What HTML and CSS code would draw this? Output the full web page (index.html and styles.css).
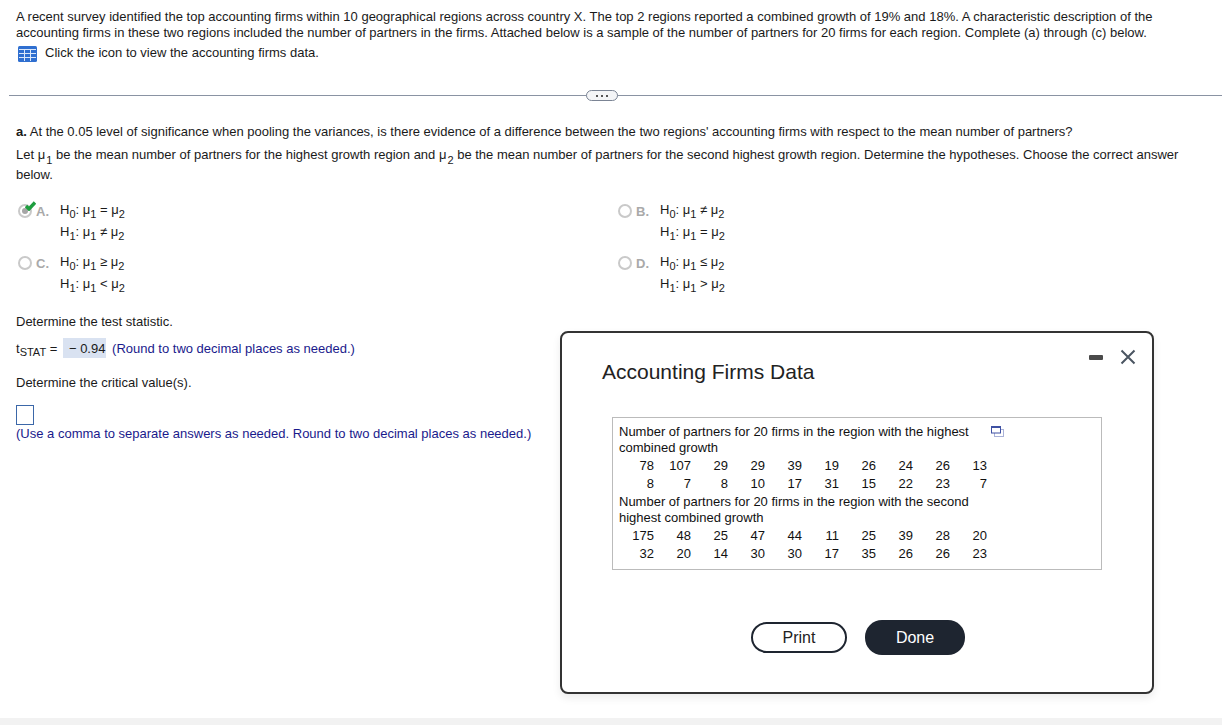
FILE: index.html
```html
<!DOCTYPE html>
<html lang="en">
<head>
<meta charset="utf-8">
<title>Accounting Firms Data</title>
<link rel="stylesheet" href="styles.css">
</head>
<body>
<main class="page">
  <section class="intro">
    <p>A recent survey identified the top accounting firms within 10 geographical regions across country X. The top 2 regions reported a combined growth of 19% and 18%. A characteristic description of the accounting firms in these two regions included the number of partners in the firms. Attached below is a sample of the number of partners for 20 firms for each region. Complete (a) through (c) below.</p>
    <div class="data-link">
      <svg class="grid-icon" width="19" height="16" viewBox="0 0 19 16"><rect width="19" height="16" rx="1.500" fill="#2f6fd0"/><path d="M1 3.500h17M1 7.500h17M1 11.500h17M6.500 3v12M12.500 3v12" stroke="#dbe8fa" stroke-width="1"/></svg>
      <span>Click the icon to view the accounting firms data.</span>
    </div>
  </section>
  <div class="divider"><span class="more"><i></i><i></i><i></i></span></div>
  <section class="question">
    <p class="q-line"><b>a.</b> At the 0.05 level of significance when pooling the variances, is there evidence of a difference between the two regions' accounting firms with respect to the mean number of partners?</p>
    <p class="q-let">Let <span class="mu">μ<sub>1</sub></span> be the mean number of partners for the highest growth region and <span class="mu">μ<sub>2</sub></span> be the mean number of partners for the second highest growth region. Determine the hypotheses. Choose the correct answer below.</p>
  </section>
  <section class="choices">
    <div class="choice">
      <span class="radio selected"><i></i><svg class="check" width="11" height="10" viewBox="0 0 11 10"><path d="M1 5l3 3L10 1.500" fill="none" stroke="#1e9e3e" stroke-width="3.400"/></svg></span>
      <span class="letter">A.</span>
      <div class="hyp"><div>H<sub>0</sub>: <span>μ<sub>1</sub></span> = <span>μ<sub>2</sub></span></div><div>H<sub>1</sub>: <span>μ<sub>1</sub></span> ≠ <span>μ<sub>2</sub></span></div></div>
    </div>
    <div class="choice">
      <span class="radio"></span>
      <span class="letter">B.</span>
      <div class="hyp"><div>H<sub>0</sub>: <span>μ<sub>1</sub></span> ≠ <span>μ<sub>2</sub></span></div><div>H<sub>1</sub>: <span>μ<sub>1</sub></span> = <span>μ<sub>2</sub></span></div></div>
    </div>
    <div class="choice">
      <span class="radio"></span>
      <span class="letter">C.</span>
      <div class="hyp"><div>H<sub>0</sub>: <span>μ<sub>1</sub></span> ≥ <span>μ<sub>2</sub></span></div><div>H<sub>1</sub>: <span>μ<sub>1</sub></span> &lt; <span>μ<sub>2</sub></span></div></div>
    </div>
    <div class="choice">
      <span class="radio"></span>
      <span class="letter">D.</span>
      <div class="hyp"><div>H<sub>0</sub>: <span>μ<sub>1</sub></span> ≤ <span>μ<sub>2</sub></span></div><div>H<sub>1</sub>: <span>μ<sub>1</sub></span> &gt; <span>μ<sub>2</sub></span></div></div>
    </div>
  </section>
  <section class="answers">
    <p class="a-test">Determine the test statistic.</p>
    <p class="a-stat">t<sub>STAT</sub> = <span class="value">− 0.94</span> <span class="hint">(Round to two decimal places as needed.)</span></p>
    <p class="a-crit">Determine the critical value(s).</p>
    <span class="input-box"></span>
    <p class="hint">(Use a comma to separate answers as needed. Round to two decimal places as needed.)</p>
  </section>
</main>
<div class="bottom-bar"></div>
<aside class="modal">
  <div class="modal-tools">
    <span class="minimize"></span>
    <svg class="close" width="16" height="16" viewBox="0 0 16 16"><path d="M1.500 1.500l13 13M14.500 1.500l-13 13" stroke="#4a5561" stroke-width="2" fill="none"/></svg>
  </div>
  <h2>Accounting Firms Data</h2>
  <div class="data-box">
    <svg class="copy-icon" width="13" height="11" viewBox="0 0 13 11"><rect x="3.500" y="3.500" width="9" height="7" fill="#fff" stroke="#aab2d8"/><rect x="0.500" y="0.500" width="9" height="6.500" fill="#fff" stroke="#3f51a3"/><path d="M1 1.500h8" stroke="#3f51a3" stroke-width="1"/></svg>
    <p>Number of partners for 20 firms in the region with the highest combined growth</p>
    <table>
      <tr><td>78</td><td>107</td><td>29</td><td>29</td><td>39</td><td>19</td><td>26</td><td>24</td><td>26</td><td>13</td></tr>
      <tr><td>8</td><td>7</td><td>8</td><td>10</td><td>17</td><td>31</td><td>15</td><td>22</td><td>23</td><td>7</td></tr>
    </table>
    <p>Number of partners for 20 firms in the region with the second highest combined growth</p>
    <table>
      <tr><td>175</td><td>48</td><td>25</td><td>47</td><td>44</td><td>11</td><td>25</td><td>39</td><td>28</td><td>20</td></tr>
      <tr><td>32</td><td>20</td><td>14</td><td>30</td><td>30</td><td>17</td><td>35</td><td>26</td><td>26</td><td>23</td></tr>
    </table>
  </div>
  <div class="modal-actions">
    <button class="btn btn-print">Print</button>
    <button class="btn btn-done">Done</button>
  </div>
</aside>
</body>
</html>
```

FILE: styles.css
```css
* { box-sizing: border-box; }
html, body { margin: 0; padding: 0; height: 725px; overflow: hidden; background: #fff; }
body { font-family: "Liberation Sans", Arial, sans-serif; font-size: 13px; line-height: 16px; color: #1a1a1a; position: relative; }
p { margin: 0; }
sub { font-size: 11px; line-height: 0; vertical-align: -4px; }
.page { display: flex; flex-direction: column; }
.intro { padding: 9px 60px 0 16px; }
.data-link { display: flex; align-items: center; gap: 8px; margin: 2px 0 0 2px; height: 20px; }
.grid-icon { display: block; margin-top: 2px; }
.divider { position: relative; margin: 32px 0 0 9px; height: 1px; background: #8a93a3; }
.more { position: absolute; left: 577px; top: -5px; width: 32px; height: 11px; border: 1px solid #7b8494; border-radius: 6px; background: #f4f5f7; display: flex; justify-content: center; align-items: center; gap: 3px; }
.more i { width: 2px; height: 2px; background: #555; }
.question { padding: 28px 30px 0 16px; }
.q-let { margin-top: 5px; line-height: 20px; }
.q-let sub { vertical-align: -5px; margin-left: 1px; }
.choices { display: grid; grid-template-columns: 600px 1fr; row-gap: 7px; padding: 18px 0 0 18px; }
.choice { display: flex; align-items: flex-start; height: 45px; }
.radio { position: relative; width: 14px; height: 14px; border: 2px solid #c9c9c9; border-radius: 50%; margin-top: 1px; flex: none; }
.radio.selected i { position: absolute; left: 2px; top: 2px; width: 6px; height: 6px; border-radius: 50%; background: #a6a6a6; }
.check { position: absolute; left: 5px; top: -5px; }
.letter { width: 28px; padding: 1px 0 0 4px; color: #a9a9a9; font-weight: bold; flex: none; }
.hyp div { height: 22px; line-height: 14px; }
.answers { padding: 0 0 0 16px; margin-top: 14px; }
.a-stat { margin-top: 8px; height: 22px; line-height: 21px; }
.a-stat sub { vertical-align: -3px; }
.value { display: inline-block; height: 20px; padding: 0 1px 0 6px; margin-left: 2px; background: #d9e2f1; color: #1a1a1a; }
.hint { color: #1a1a8c; }
.a-stat .hint { margin-left: 2px; }
.a-crit { margin-top: 15px; }
.input-box { display: block; width: 18px; height: 20px; border: 1px solid #3b67a8; margin: 14px 0 1px; }
.bottom-bar { position: absolute; left: 0; right: 0; top: 718px; height: 7px; background: #f2f2f2; }
.modal { position: absolute; left: 560px; top: 331px; width: 594px; height: 363px; background: #fff; border: 2px solid #333; border-radius: 8px; padding: 26px 50px 0 40px; box-shadow: 0 4px 8px rgba(0,0,0,.08); }
.modal-tools { position: absolute; right: 16px; top: 16px; display: flex; align-items: center; gap: 17px; }
.minimize { width: 14px; height: 5px; margin-top: 1px; background: #4a4a4a; border-radius: 1px; }
.close { display: block; }
.modal h2 { margin: 0; font-size: 21px; line-height: 26px; font-weight: normal; color: #222; }
.data-box { position: relative; width: 490px; height: 153px; margin: 32px 0 0 10px; padding: 6px 6px 0; border: 1px solid #bbb; color: #111; }
.data-box p { width: 360px; }
.copy-icon { position: absolute; left: 378px; top: 8px; }
table { border-collapse: collapse; table-layout: fixed; margin: 1px 0; }
td { padding: 0; width: 37px; height: 18px; text-align: right; line-height: 18px; }
td:first-child { width: 35px; }
.modal-actions { display: flex; justify-content: center; gap: 18px; margin: 50px 0 0 12px; }
.btn { font: 16px "Liberation Sans", Arial, sans-serif; border-radius: 17px; cursor: pointer; }
.btn-print { width: 96px; height: 31px; margin-top: 2px; background: #fff; border: 2px solid #1e2530; color: #222; }
.btn-done { width: 100px; height: 35px; background: #1e2530; border: none; color: #fff; }
```
